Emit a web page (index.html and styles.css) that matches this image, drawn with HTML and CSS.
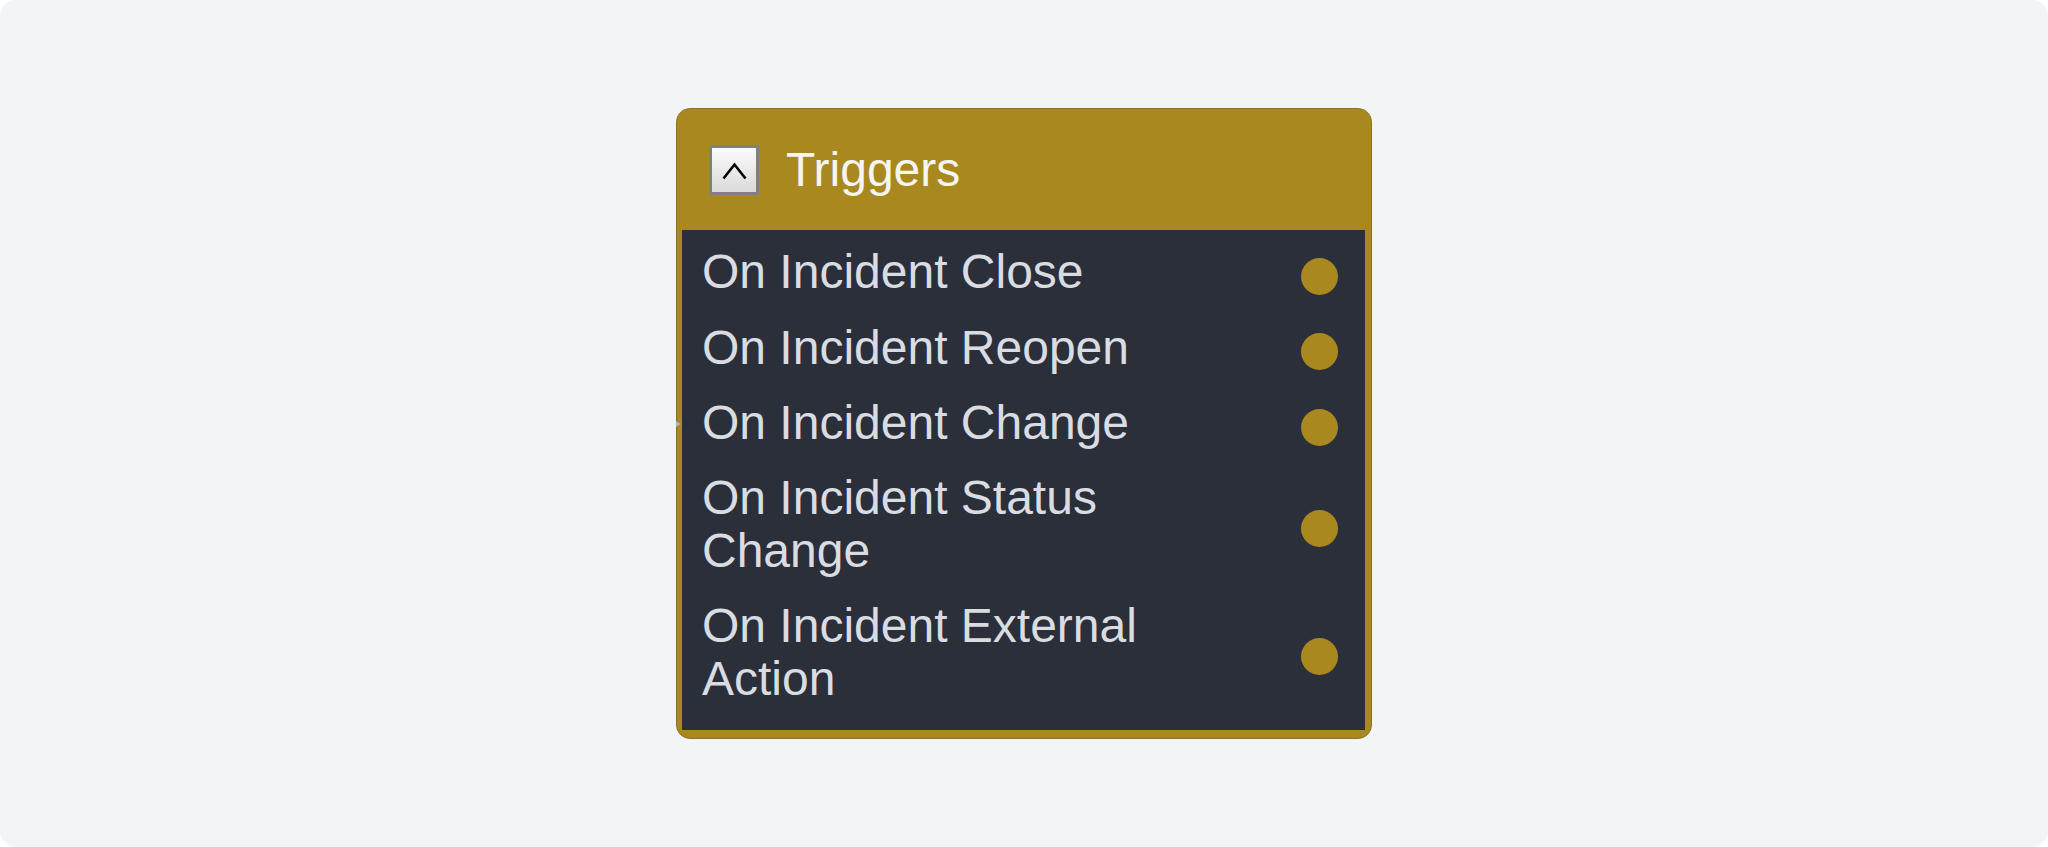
FILE: index.html
```html
<!DOCTYPE html>
<html lang="en">
<head>
<meta charset="utf-8">
<title>Triggers</title>
<link rel="stylesheet" href="styles.css">
</head>
<body>
<div class="canvas">
  <div class="node">
    <span class="handle-in"></span>
    <div class="node-header">
      <button class="collapse-btn" aria-label="Collapse">
        <svg width="25" height="18" viewBox="0 0 25 18"><polyline points="1.5,16.5 12.5,2.5 23.5,16.5" fill="none" stroke="#000" stroke-width="2.6" stroke-linejoin="miter"/></svg>
      </button>
      <span class="node-title">Triggers</span>
    </div>
    <div class="node-body">
      <div class="row"><span class="label">On Incident Close</span><span class="dot"></span></div>
      <div class="row"><span class="label">On Incident Reopen</span><span class="dot"></span></div>
      <div class="row"><span class="label">On Incident Change</span><span class="dot"></span></div>
      <div class="row"><span class="label">On Incident Status Change</span><span class="dot"></span></div>
      <div class="row"><span class="label">On Incident External Action</span><span class="dot"></span></div>
    </div>
  </div>
</div>
</body>
</html>
```

FILE: styles.css
```css
html, body {
  margin: 0;
  padding: 0;
  background: #ffffff;
}
.canvas {
  width: 2048px;
  height: 847px;
  background: #f3f4f6;
  border-radius: 16px;
  display: flex;
  align-items: center;
  justify-content: center;
  font-family: "Liberation Sans", Arial, sans-serif;
}
.node {
  position: relative;
  width: 696px;
  box-sizing: border-box;
  background: #a98820;
  border: 1px solid #8a7424;
  border-radius: 14px;
  padding: 0 6px 8px 5px;
}
.handle-in {
  position: absolute;
  left: -1px;
  top: 312px;
  width: 0;
  height: 0;
  border-top: 3px solid transparent;
  border-bottom: 3px solid transparent;
  border-left: 5px solid #a9b6c6;
}
.node-header {
  height: 121px;
  display: flex;
  align-items: center;
  padding-left: 27px;
  gap: 27px;
}
.collapse-btn {
  width: 50px;
  height: 50px;
  box-sizing: border-box;
  border: 3px solid #808080;
  background: linear-gradient(#fbfbfb, #dadada);
  padding: 3px 0 0 0;
  margin: 0;
  display: flex;
  align-items: center;
  justify-content: center;
}
.node-title {
  color: #f5f5f4;
  font-size: 48px;
  line-height: 1.1;
  margin-top: 2px;
}
.node-body {
  background: #2b2f3a;
  padding: 16px 27px 24px 20px;
  display: flex;
  flex-direction: column;
  gap: 22.5px;
}
.row {
  display: flex;
  align-items: center;
  justify-content: space-between;
}
.label {
  color: #d9dce1;
  font-size: 48px;
  line-height: 1.1;
  max-width: 500px;
}
.dot {
  width: 37px;
  height: 37px;
  border-radius: 50%;
  background: #a98820;
  margin-top: 8px;
  flex: none;
}
```
